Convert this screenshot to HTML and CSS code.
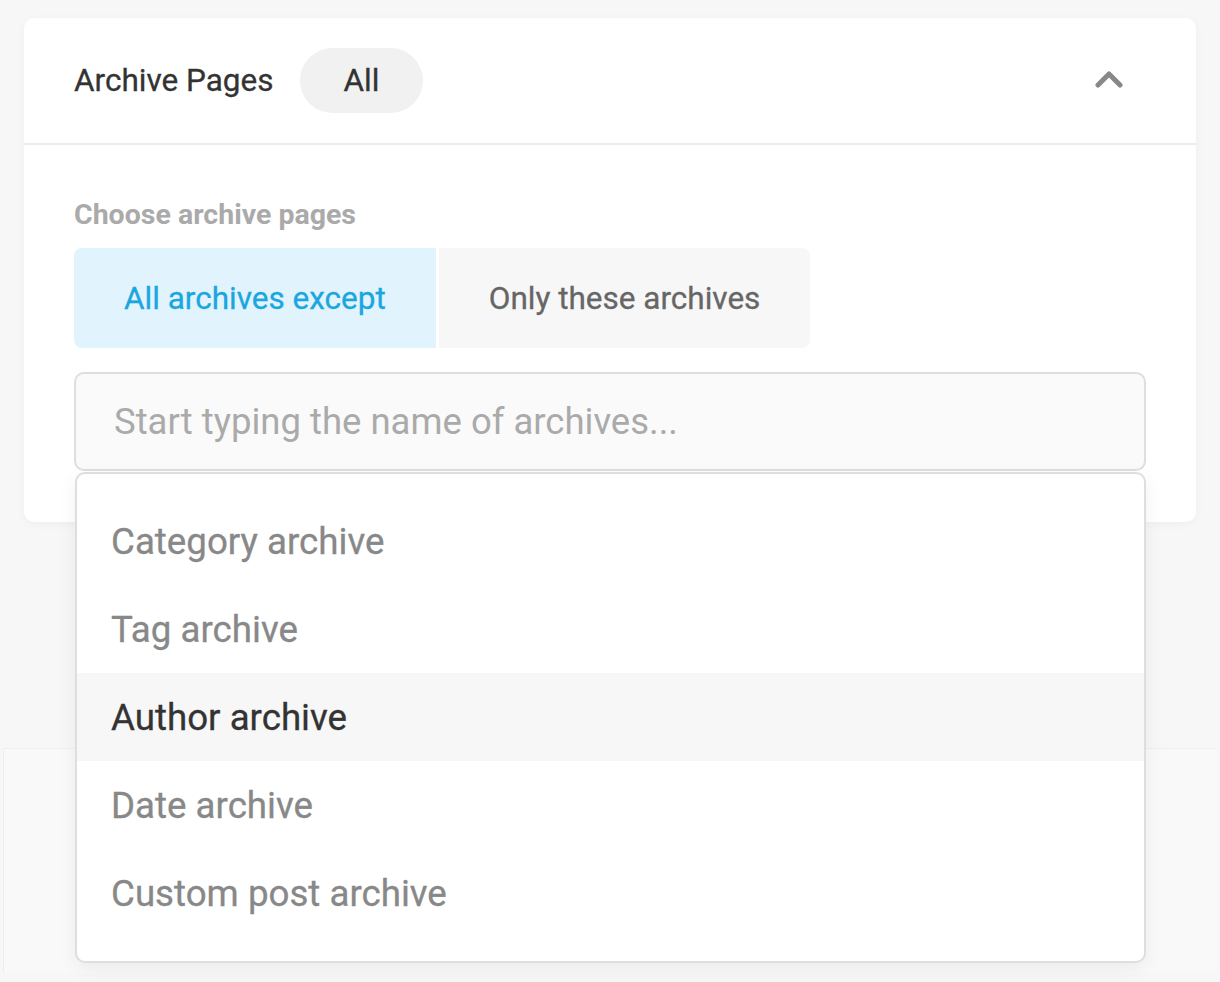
FILE: index.html
```html
<!DOCTYPE html>
<html lang="en">
<head>
    <meta charset="UTF-8">
    <meta name="viewport" content="width=device-width, initial-scale=1.0">
    <title>Archive Pages</title>
    <link rel="stylesheet" href="styles.css">
</head>
<body>
    <main class="page">
        <section class="card">
            <div class="card-header">
                <h2 class="title">Archive Pages</h2>
                <span class="pill">All</span>
                <button class="toggle" aria-label="Collapse">
                    <svg width="30" height="20" viewBox="0 0 30 20">
                        <polyline points="4,14 15,3 26,14" fill="none" stroke="#888" stroke-width="5" stroke-linecap="round" stroke-linejoin="round"/>
                    </svg>
                </button>
            </div>
            <div class="card-body">
                <div class="label">Choose archive pages</div>
                <div class="segmented">
                    <button class="seg active">All archives except</button>
                    <button class="seg">Only these archives</button>
                </div>
                <div class="search">
                    <input class="search-input" type="text" placeholder="Start typing the name of archives...">
                    <ul class="dropdown">
                        <li class="option">Category archive</li>
                        <li class="option">Tag archive</li>
                        <li class="option hover">Author archive</li>
                        <li class="option">Date archive</li>
                        <li class="option">Custom post archive</li>
                    </ul>
                </div>
            </div>
        </section>
        <div class="below-panel"></div>
    </main>
</body>
</html>
```

FILE: styles.css
```css
body {
    background-color: #f7f7f7;
    font-family: Roboto, "Noto Sans", sans-serif;
    margin: 0;
    padding: 0;
    height: 982px;
    overflow: hidden;
}

.page {
    padding: 18px 24px 0;
}

.card {
    background-color: #fff;
    border-radius: 10px;
    box-shadow: 0px 2px 10px rgba(0, 0, 0, 0.04);
    position: relative;
    z-index: 1;
}

.card-header {
    display: flex;
    align-items: center;
    padding: 30px 72px 30px 50px;
    border-bottom: 2px solid #ececec;
}

.title {
    margin: 0 26px 0 0;
    font-size: 31.5px;
    font-weight: 400;
    color: #333;
    -webkit-text-stroke: 0.3px #333;
}

.pill {
    height: 65px;
    display: flex;
    align-items: center;
    padding: 0 44px;
    border-radius: 33px;
    background-color: #f1f1f1;
    font-size: 31.5px;
    color: #333;
    -webkit-text-stroke: 0.3px #333;
}

.toggle {
    margin-left: auto;
    border: none;
    background: none;
    padding: 0;
    display: flex;
    cursor: pointer;
}

.card-body {
    padding: 53px 50px 51px 50px;
}

.label {
    font-size: 28.5px;
    font-weight: 700;
    color: #aaa;
}

.segmented {
    display: flex;
    gap: 3px;
    margin-top: 17px;
}

.seg {
    height: 100px;
    padding: 0 50px;
    border: none;
    font-family: inherit;
    font-size: 31.5px;
    color: #666;
    background-color: #f7f7f7;
    border-radius: 0 8px 8px 0;
    cursor: pointer;
    -webkit-text-stroke: 0.3px #666;
}

.seg.active {
    background-color: #e1f4fd;
    color: #1ba6e0;
    border-radius: 8px 0 0 8px;
    -webkit-text-stroke: 0.3px #1ba6e0;
}

.search {
    position: relative;
    margin-top: 24px;
}

.search-input {
    display: block;
    width: 100%;
    box-sizing: border-box;
    height: 99px;
    padding: 0 38px;
    border: 2px solid #dedede;
    border-radius: 10px;
    background-color: #fafafa;
    font-family: inherit;
    font-size: 36.5px;
    color: #333;
    outline: none;
}

.search-input::placeholder {
    color: #aaa;
}

.dropdown {
    position: absolute;
    top: calc(100% + 1px);
    left: 1px;
    right: 0;
    list-style: none;
    margin: 0;
    padding: 23px 0 24px;
    background-color: #fff;
    border: 2px solid #dedede;
    border-radius: 10px;
    box-shadow: 0px 6px 20px rgba(0, 0, 0, 0.06);
    z-index: 5;
}

.option {
    height: 88px;
    display: flex;
    align-items: center;
    padding: 0 34px;
    font-size: 36.7px;
    color: #888;
    cursor: pointer;
    -webkit-text-stroke: 0.3px #888;
}

.option.hover {
    background-color: #f7f7f7;
    color: #333;
    -webkit-text-stroke: 0.3px #333;
}

.below-panel {
    margin: 226px -21px 0;
    height: 224px;
    background-color: #f9f9f9;
    border-left: 1px solid #eee;
    border-top: 1px solid #eee;
}
```
